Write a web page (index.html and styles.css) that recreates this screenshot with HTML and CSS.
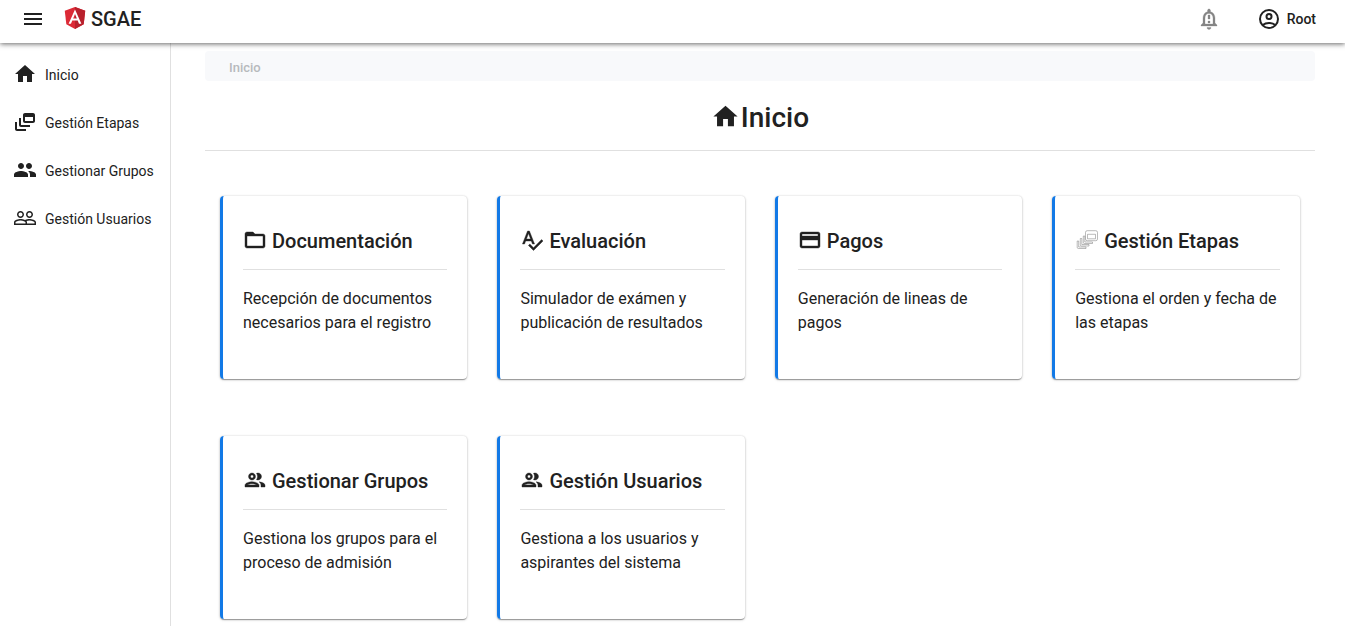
FILE: index.html
```
<!DOCTYPE html>
<html lang="es">
<head>
<meta charset="utf-8">
<title>SGAE</title>
<link rel="stylesheet" href="styles.css">
</head>
<body>
<svg class="sprite" aria-hidden="true">
  <symbol id="menu" viewBox="0 0 24 24"><path d="M3 18h18v-2H3v2zm0-5h18v-2H3v2zm0-7v2h18V6H3z"/></symbol>
  <symbol id="home" viewBox="0 0 24 24"><path d="M10 20v-6h4v6h5v-8h3L12 3 2 12h3v8z"/></symbol>
  <symbol id="feed" viewBox="0 0 24 24"><path d="M8 8H6v7c0 1.1.9 2 2 2h9v-2H8V8zM20 3h-8c-1.1 0-2 .9-2 2v6c0 1.1.9 2 2 2h8c1.1 0 2-.9 2-2V5c0-1.1-.9-2-2-2zm0 8h-8V7h8v4zM4 12H2v7c0 1.1.9 2 2 2h9v-2H4v-7z"/></symbol>
  <symbol id="group" viewBox="0 0 24 24"><path d="M16 11c1.66 0 2.99-1.34 2.99-3S17.66 5 16 5c-1.66 0-3 1.34-3 3s1.34 3 3 3zm-8 0c1.66 0 2.99-1.34 2.99-3S9.66 5 8 5C6.34 5 5 6.34 5 8s1.34 3 3 3zm0 2c-2.33 0-7 1.17-7 3.5V19h14v-2.5c0-2.33-4.67-3.5-7-3.5zm8 0c-.29 0-.62.02-.97.05 1.16.84 1.97 1.97 1.97 3.45V19h6v-2.5c0-2.33-4.67-3.5-7-3.5z"/></symbol>
  <symbol id="people" viewBox="0 0 24 24"><path d="M16.5 13c-1.2 0-3.07.34-4.5 1-1.43-.67-3.3-1-4.5-1C5.33 13 1 14.08 1 16.25V19h22v-2.75c0-2.17-4.33-3.25-6.5-3.25zm-4 4.5h-10v-1.25c0-.54 2.56-1.75 5-1.75s5 1.21 5 1.75v1.25zm9 0H14v-1.25c0-.46-.2-.86-.52-1.22.88-.3 1.96-.53 3.02-.53 2.44 0 5 1.21 5 1.75v1.25zM7.5 12c1.93 0 3.5-1.57 3.5-3.5S9.43 5 7.5 5 4 6.57 4 8.5 5.57 12 7.5 12zm0-5.5c1.1 0 2 .9 2 2s-.9 2-2 2-2-.9-2-2 .9-2 2-2zm9 5.5c1.93 0 3.5-1.57 3.5-3.5S18.43 5 16.5 5 13 6.57 13 8.5s1.57 3.5 3.5 3.5zm0-5.5c1.1 0 2 .9 2 2s-.9 2-2 2-2-.9-2-2 .9-2 2-2z"/></symbol>
  <symbol id="group-outline" viewBox="0 0 24 24"><path d="M9 13.75c-2.34 0-7 1.17-7 3.5V19h14v-1.75c0-2.33-4.66-3.5-7-3.5zM4.34 17c.84-.58 2.87-1.25 4.66-1.25s3.82.67 4.66 1.25H4.34zM9 12c1.93 0 3.5-1.57 3.5-3.5S10.93 5 9 5 5.5 6.57 5.5 8.5 7.07 12 9 12zm0-5c.83 0 1.5.67 1.5 1.5S9.83 10 9 10s-1.5-.67-1.5-1.5S8.17 7 9 7zm7.04 6.81c1.16.84 1.96 1.96 1.96 3.44V19h4v-1.75c0-2.02-3.5-3.17-5.96-3.44zM15 12c1.93 0 3.5-1.57 3.5-3.5S16.93 5 15 5c-.54 0-1.04.13-1.5.35.63.89 1 1.98 1 3.15s-.37 2.26-1 3.15c.46.22.96.35 1.5.35z"/></symbol>
  <symbol id="folder" viewBox="0 0 24 24"><path d="M20 6h-8l-2-2H4c-1.1 0-2 .9-2 2v12c0 1.1.9 2 2 2h16c1.1 0 2-.9 2-2V8c0-1.1-.9-2-2-2zm0 12H4V8h16v10z"/></symbol>
  <symbol id="spellcheck" viewBox="0 0 24 24"><path d="M12.45 16h2.09L9.43 3H7.57L2.46 16h2.09l1.12-3h5.64l1.14 3zm-6.02-5L8.5 5.48 10.57 11H6.43zm15.16.59l-8.09 8.09L9.83 16l-1.41 1.41 5.09 5.09L23 13l-1.41-1.41z"/></symbol>
  <symbol id="card" viewBox="0 0 24 24"><path d="M20 4H4c-1.11 0-1.99.89-1.99 2L2 18c0 1.11.89 2 2 2h16c1.11 0 2-.89 2-2V6c0-1.11-.89-2-2-2zm0 14H4v-6h16v6zm0-10H4V6h16v2z"/></symbol>
  <symbol id="stack" viewBox="0 0 24 24"><g fill="none" stroke="#777" stroke-width=".5"><rect x="10.500" y="2.700" width="12" height="10" rx="1.700"/><path d="M12.500 6.300h8v4.500h-8z"/><path d="M8.300 8H9.800v6h7.700v1.500H9.500q-1.200 0-1.200-1.200zM5.300 10.500h1.500v6h7.200V18H6.500q-1.200 0-1.200-1.200zM2.200 13h1.500v6H11v1.500H3.400q-1.200 0-1.200-1.200z"/></g></symbol>
  <symbol id="bell" viewBox="0 0 24 24"><path fill-rule="evenodd" d="M18 16v-5c0-3.070-1.630-5.640-4.500-6.320V3.500c0-.83-.67-1.500-1.500-1.500s-1.500.67-1.500 1.500v1.180C7.640 5.360 6 7.920 6 11v5l-2 2v1h16v-1l-2-2zm-2 1H8v-6c0-2.480 1.510-4.500 4-4.500s4 2.020 4 4.500v6zM12 22.500c1.100 0 2-.9 2-2h-4c0 1.100.9 2 2 2zM11 8h2v4h-2zm0 6h2v2h-2z"/></symbol>
  <symbol id="account" viewBox="0 0 24 24"><g fill="none" stroke="currentColor" stroke-width="2"><circle cx="12" cy="12" r="9"/><circle cx="12" cy="9.500" r="2.500"/><path d="M5.800 18c1.600-1.400 3.800-2.100 6.200-2.100s4.600.7 6.200 2.100"/></g></symbol>
</svg>
<header class="topbar">
  <svg class="icon"><use href="#menu"/></svg>
  <svg class="logo" viewBox="31 30 188 200"><path fill="#dc2a36" d="M125 30 31.900 63.200l14.200 123.100L125 230l78.900-43.700 14.200-123.100z"/><path fill="#b8202c" d="M125 30v200l78.900-43.700 14.200-123.100z"/><path fill="#fff" d="M125 52.100 66.800 182.600h21.700l11.700-29.200h49.400l11.700 29.200H183zm17 83.300h-34l17-40.900z"/></svg>
  <span class="brand">SGAE</span>
  <svg class="icon bell"><use href="#bell"/></svg>
  <svg class="icon account"><use href="#account"/></svg>
  <span class="user">Root</span>
</header>
<div class="shell">
  <nav class="side">
    <a class="item"><svg class="icon"><use href="#home"/></svg><span>Inicio</span></a>
    <a class="item"><svg class="icon"><use href="#feed"/></svg><span>Gestión Etapas</span></a>
    <a class="item"><svg class="icon"><use href="#group"/></svg><span>Gestionar Grupos</span></a>
    <a class="item"><svg class="icon"><use href="#people"/></svg><span>Gestión Usuarios</span></a>
  </nav>
  <main class="main">
    <div class="crumb">Inicio</div>
    <h1 class="title"><svg class="title-icon"><use href="#home"/></svg>Inicio</h1>
    <div class="grid">
      <section class="card"><h2><svg class="icon"><use href="#folder"/></svg>Documentación</h2><p>Recepción de documentos necesarios para el registro</p></section>
      <section class="card"><h2><svg class="icon"><use href="#spellcheck"/></svg>Evaluación</h2><p>Simulador de exámen y publicación de resultados</p></section>
      <section class="card"><h2><svg class="icon"><use href="#card"/></svg>Pagos</h2><p>Generación de lineas de pagos</p></section>
      <section class="card"><h2><svg class="icon thin"><use href="#stack"/></svg>Gestión Etapas</h2><p>Gestiona el orden y fecha de las etapas</p></section>
      <section class="card"><h2><svg class="icon"><use href="#group-outline"/></svg>Gestionar Grupos</h2><p>Gestiona los grupos para el proceso de admisión</p></section>
      <section class="card"><h2><svg class="icon"><use href="#group-outline"/></svg>Gestión Usuarios</h2><p>Gestiona a los usuarios y aspirantes del sistema</p></section>
    </div>
  </main>
</div>
</body>
</html>
```
FILE: styles.css
```
* { box-sizing: border-box; }
body {
  margin: 0;
  height: 626px;
  overflow: hidden;
  background: #fff;
  color: #212121;
  font-family: Roboto, sans-serif;
}
.sprite { position: absolute; width: 0; height: 0; }
.icon { width: 24px; height: 24px; fill: currentColor; flex: none; }
.topbar {
  position: relative;
  z-index: 1;
  display: flex;
  align-items: center;
  height: 43px;
  padding: 0 29px 5px 21px;
  background: #fff;
  box-shadow: 0 1px 5px rgba(0, 0, 0, .6);
}
.logo { width: 22px; height: 22px; margin: 0 5px 2px 19px; }
.brand { font-size: 20px; font-weight: 500; line-height: 24px; }
.bell {
  margin: 0 36px 0 auto;
  color: #858585;
  stroke: currentColor;
  stroke-width: .3;
}
.user { margin-left: 6px; font-size: 14px; font-weight: 500; }
.shell { display: flex; height: 583px; }
.side {
  width: 171px;
  flex: none;
  padding-top: 8px;
  border-right: 1px solid #e0e0e0;
}
.item {
  display: flex;
  align-items: center;
  gap: 8px;
  height: 48px;
  padding-left: 13px;
  font-size: 14px;
  white-space: nowrap;
}
.item .icon { margin-bottom: 2px; }
.main { flex: 1; padding: 8px 30px 0 34px; }
.crumb {
  height: 30px;
  padding-left: 24px;
  border-radius: 4px;
  background: #f8f9fb;
  color: #b7babd;
  font-size: 13px;
  font-weight: 500;
  line-height: 33px;
}
.title {
  display: flex;
  justify-content: center;
  align-items: center;
  gap: 1px;
  height: 70px;
  margin: 0 0 45px;
  padding: 3px 0 0;
  border-bottom: 1px solid #e0e0e0;
  font-size: 28px;
  font-weight: 500;
}
.title-icon { width: 29px; height: 29px; margin-bottom: 2px; fill: currentColor; }
.grid {
  display: grid;
  grid-template-columns: repeat(4, 247.4px);
  gap: 57px 30px;
  padding: 0 15px;
}
.card {
  height: 183px;
  padding: 23px 20px 0;
  border-left: 3px solid #1279e6;
  border-radius: 4px;
  box-shadow: 0 2px 1px -1px rgba(0, 0, 0, .2), 0 1px 1px rgba(0, 0, 0, .14), 0 1px 3px rgba(0, 0, 0, .16), 0 0 2px rgba(0, 0, 0, .16);
}
.card h2 {
  display: flex;
  align-items: center;
  gap: 5px;
  height: 51px;
  margin: 0 0 17px;
  padding-bottom: 6px;
  border-bottom: 1px solid #e0e0e0;
  font-size: 20px;
  font-weight: 500;
  white-space: nowrap;
}
.card h2 .icon { margin-bottom: 2px; stroke: currentColor; stroke-width: .4; }
.card h2 .thin { stroke: none; }
.card p { margin: 0; font-size: 16px; line-height: 24px; }
```
